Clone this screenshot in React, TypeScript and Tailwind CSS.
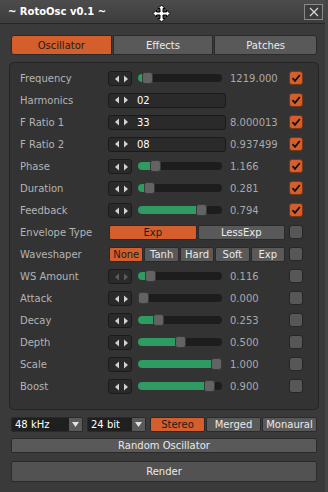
import React from "react";

const FONT = { fontFamily: '"DejaVu Sans", Verdana, sans-serif' };

type Row =
  | { kind: "slider"; label: string; pos: number; value: string; checked: boolean; dim?: boolean }
  | { kind: "input"; label: string; text: string; value: string; checked: boolean }
  | { kind: "seg"; label: string; items: string[]; active: number };

const ROWS: Row[] = [
  { kind: "slider", label: "Frequency", pos: 0.06, value: "1219.000", checked: true },
  { kind: "input", label: "Harmonics", text: "02", value: "", checked: true },
  { kind: "input", label: "F Ratio 1", text: "33", value: "8.000013", checked: true },
  { kind: "input", label: "F Ratio 2", text: "08", value: "0.937499", checked: true },
  { kind: "slider", label: "Phase", pos: 0.166, value: "1.166", checked: true },
  { kind: "slider", label: "Duration", pos: 0.08, value: "0.281", checked: true },
  { kind: "slider", label: "Feedback", pos: 0.794, value: "0.794", checked: true },
  { kind: "seg", label: "Envelope Type", items: ["Exp", "LessExp"], active: 0 },
  { kind: "seg", label: "Waveshaper", items: ["None", "Tanh", "Hard", "Soft", "Exp"], active: 0 },
  { kind: "slider", label: "WS Amount", pos: 0.09, value: "0.116", checked: false, dim: true },
  { kind: "slider", label: "Attack", pos: 0, value: "0.000", checked: false },
  { kind: "slider", label: "Decay", pos: 0.2, value: "0.253", checked: false },
  { kind: "slider", label: "Depth", pos: 0.5, value: "0.500", checked: false },
  { kind: "slider", label: "Scale", pos: 1, value: "1.000", checked: false },
  { kind: "slider", label: "Boost", pos: 0.9, value: "0.900", checked: false },
];

const Arrows = ({ dim }: { dim?: boolean }) => (
  <svg width="24" height="15" viewBox="0 0 24 15" className="shrink-0">
    <polygon points="10,3.5 10,10.5 6,7" fill={dim ? "#5c5c5c" : "#d2d2d2"} />
    <polygon points="15,3.5 15,10.5 19,7" fill={dim ? "#5c5c5c" : "#d2d2d2"} />
  </svg>
);

const Check = ({ checked }: { checked: boolean }) =>
  checked ? (
    <div className="ml-[4px] flex h-[14px] w-[14px] items-center justify-center rounded-[3px] border border-[#7a3416] bg-[#d45f2c]">
      <svg width="10" height="10" viewBox="0 0 10 10">
        <path d="M1.5 5.2 L4 7.8 L8.8 2" stroke="#111" strokeWidth="1.8" fill="none" />
      </svg>
    </div>
  ) : (
    <div className="ml-[4px] h-[14px] w-[14px] rounded-[3px] border border-[#262626] bg-[#575757]" />
  );

const Slider = ({ pos }: { pos: number }) => {
  const left = Math.round(pos * 73);
  return (
    <div className="relative ml-[6px] h-[8px] w-[84px] rounded-full bg-[#1d1d1d]">
      <div className="absolute left-0 top-0 h-[8px] rounded-full bg-[#2f9a62]" style={{ width: left + 5 }} />
      <div
        className="absolute top-[-2px] h-[12px] w-[11px] rounded-[3px] border border-[#3a3a3a] bg-[#636363]"
        style={{ left }}
      />
    </div>
  );
};

const MoveCursor = () => (
  <svg width="19" height="19" viewBox="0 0 19 19" className="absolute left-[152px] top-[4px]">
    <path
      d="M9.5 1 L13 4.5 L11 4.5 L11 8 L14.5 8 L14.5 6 L18 9.5 L14.5 13 L14.5 11 L11 11 L11 14.5 L13 14.5 L9.5 18 L6 14.5 L8 14.5 L8 11 L4.5 11 L4.5 13 L1 9.5 L4.5 6 L4.5 8 L8 8 L8 4.5 L6 4.5 Z"
      fill="#fff"
      stroke="#000"
      strokeWidth="1"
    />
  </svg>
);

export default function App() {
  return (
    <div className="relative flex h-[492px] w-[328px] flex-col border-r-[3px] border-[#454545] bg-[#3a3a3a] text-[10px]" style={FONT}>
      <div className="flex h-[24px] shrink-0 items-center justify-between border-b border-[#262626] bg-gradient-to-b from-[#4c4c4c] to-[#3d3d3d] pl-[8px] pr-[2px]">
        <span className="text-[10px] font-bold text-white">~ RotoOsc v0.1 ~</span>
        <div className="flex h-[16px] w-[19px] items-center justify-center border border-[#8a8a8a] bg-[#3c3c3c]">
          <svg width="10" height="10" viewBox="0 0 10 10">
            <path d="M1 1 L9 9 M9 1 L1 9" stroke="#d8d8d8" strokeWidth="1.2" />
          </svg>
        </div>
      </div>
      <MoveCursor />

      <div className="flex flex-col pl-[9px] pr-[6px] pt-[11px]">
        <div className="mx-[2px] flex h-[20px] gap-px">
          <div className="flex flex-1 items-center justify-center rounded-l-[3px] border border-[#2a2a2a] bg-[#d45f2c] text-[#1c1c1c]">Oscillator</div>
          <div className="flex flex-1 items-center justify-center border border-[#2a2a2a] bg-[#595959] text-[#eaeaea]">Effects</div>
          <div className="flex flex-[1.02] items-center justify-center rounded-r-[3px] border border-[#2a2a2a] bg-[#595959] text-[#eaeaea]">Patches</div>
        </div>

        <div className="mt-[7px] flex flex-col rounded-[5px] border border-[#232323] bg-[#333333] pb-[12px] pl-[10px] pt-[4px]">
          {ROWS.map((r) => (
            <div key={r.label} className="flex h-[22px] items-center">
              <div className="w-[88px] text-[#b3b3b3]">{r.label}</div>
              {r.kind === "slider" && (
                <>
                  <div className="flex w-[177px] items-center">
                    <div className="h-[15px] w-[24px] rounded-[3px] border border-[#1a1a1a] bg-[#2a2a2a]">
                      <Arrows dim={r.dim} />
                    </div>
                    <Slider pos={r.pos} />
                    <span className="ml-[8px] text-[#a9a9a9]">{r.value}</span>
                  </div>
                  <Check checked={r.checked} />
                </>
              )}
              {r.kind === "input" && (
                <>
                  <div className="flex w-[177px] items-center">
                    <div className="flex h-[15px] w-[118px] items-center rounded-[3px] border border-[#1a1a1a] bg-[#2a2a2a]">
                      <Arrows />
                      <span className="ml-[4px] text-white">{r.text}</span>
                    </div>
                    <span className="ml-[4px] text-[#a9a9a9]">{r.value}</span>
                  </div>
                  <Check checked={r.checked} />
                </>
              )}
              {r.kind === "seg" && (
                <>
                  <div className="flex h-[15px] w-[177px] gap-px pl-px">
                    {r.items.map((it, i) => (
                      <div
                        key={it}
                        className={
                          i === r.active
                            ? "flex flex-1 items-center justify-center rounded-[2px] border border-[#2a2a2a] bg-[#d45f2c] text-[#1c1c1c]"
                            : "flex flex-1 items-center justify-center rounded-[2px] border border-[#2a2a2a] bg-[#595959] text-[#eaeaea]"
                        }
                      >
                        {it}
                      </div>
                    ))}
                  </div>
                  <Check checked={false} />
                </>
              )}
            </div>
          ))}
        </div>

        <div className="mx-[2px] mt-[7px] flex h-[15px] items-stretch">
          <div className="flex w-[72px] items-center rounded-[2px] border border-[#2a2a2a] bg-[#1f1f1f]">
            <span className="flex-1 pl-[3px] text-white">48 kHz</span>
            <div className="flex h-full w-[13px] items-center justify-center bg-[#5a5a5a]">
              <svg width="7" height="5" viewBox="0 0 7 5"><polygon points="0,0 7,0 3.5,5" fill="#e0e0e0" /></svg>
            </div>
          </div>
          <div className="ml-[4px] flex w-[59px] items-center rounded-[2px] border border-[#2a2a2a] bg-[#1f1f1f]">
            <span className="flex-1 pl-[3px] text-white">24 bit</span>
            <div className="flex h-full w-[13px] items-center justify-center bg-[#5a5a5a]">
              <svg width="7" height="5" viewBox="0 0 7 5"><polygon points="0,0 7,0 3.5,5" fill="#e0e0e0" /></svg>
            </div>
          </div>
          <div className="ml-[4px] flex flex-1 gap-px">
            <div className="flex w-[55px] items-center justify-center rounded-[2px] border border-[#2a2a2a] bg-[#d45f2c] text-[#1c1c1c]">Stereo</div>
            <div className="flex w-[55px] items-center justify-center rounded-[2px] border border-[#2a2a2a] bg-[#595959] text-[#eaeaea]">Merged</div>
            <div className="flex flex-1 items-center justify-center rounded-[2px] border border-[#2a2a2a] bg-[#595959] text-[#eaeaea]">Monaural</div>
          </div>
        </div>

        <div className="mx-[2px] mt-[6px] flex h-[15px] items-center justify-center rounded-[2px] border border-[#2a2a2a] bg-[#595959] text-[#eaeaea]">
          Random Oscillator
        </div>
        <div className="mx-[2px] mt-[8px] flex h-[21px] items-center justify-center rounded-[2px] border border-[#2a2a2a] bg-[#525252] text-[#eaeaea]">
          Render
        </div>
      </div>
    </div>
  );
}
